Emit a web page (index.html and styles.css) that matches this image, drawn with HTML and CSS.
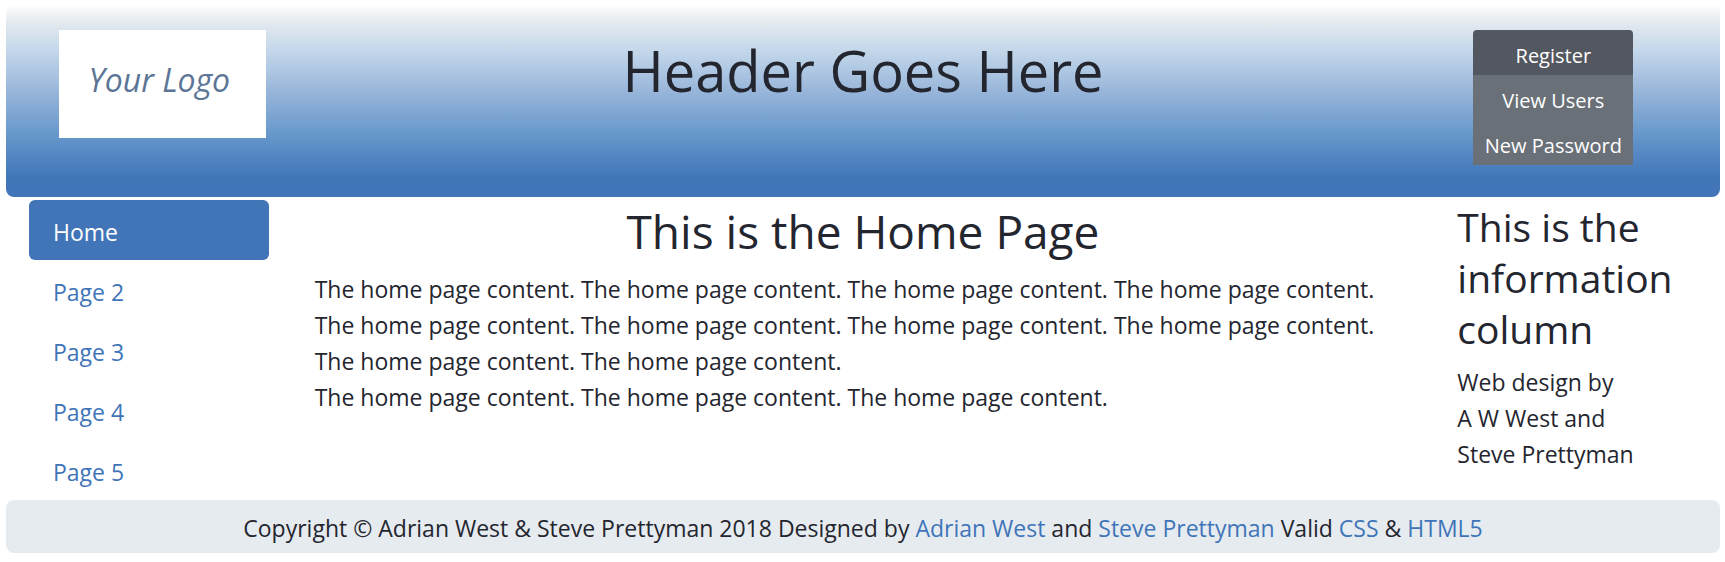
FILE: index.html
```html
<!DOCTYPE html>
<html lang="en">
<head>
<meta charset="utf-8">
<title>Home Page</title>
<meta name="viewport" content="width=device-width, initial-scale=1">
<link rel="stylesheet" href="styles.css">
</head>
<body class="page">
<header class="header">
  <div class="logo-cell"><div class="logo">Your Logo</div></div>
  <h1 class="header-title">Header Goes Here</h1>
  <nav class="header-nav" aria-label="Account">
    <button class="header-button header-button-active" type="button">Register</button>
    <button class="header-button" type="button">View Users</button>
    <button class="header-button" type="button">New Password</button>
  </nav>
</header>
<div class="body-row">
  <nav class="side-nav" aria-label="Pages">
    <a class="side-link side-link-active" href="#home">Home</a>
    <a class="side-link" href="#page2">Page 2</a>
    <a class="side-link" href="#page3">Page 3</a>
    <a class="side-link" href="#page4">Page 4</a>
    <a class="side-link" href="#page5">Page 5</a>
  </nav>
  <main class="content">
    <h2 class="content-title">This is the Home Page</h2>
    <p class="text">The home page content. The home page content. The home page content. The home page content.<br>
    The home page content. The home page content. The home page content. The home page content.<br>
    The home page content. The home page content.<br>
    The home page content. The home page content. The home page content.</p>
  </main>
  <aside class="info">
    <h3 class="info-title">This is the information column</h3>
    <p class="text">Web design by<br>A W West and<br>Steve Prettyman</p>
  </aside>
</div>
<footer class="footer">
  <p class="text">Copyright © Adrian West &amp; Steve Prettyman 2018 Designed by <a class="link" href="#west">Adrian West</a> and <a class="link" href="#prettyman">Steve Prettyman</a> Valid <a class="link" href="#css">CSS</a> &amp; <a class="link" href="#html5">HTML5</a></p>
</footer>
</body>
</html>
```
FILE: styles.css
```css
* {
  box-sizing: border-box;
}

.page {
  margin: 0;
  padding: 5px 5px 8px 6px;
  background: #fff;
  color: #24262f;
  font-family: "Open Sans", "Noto Sans", sans-serif;
  font-size: 23px;
  line-height: 36px;
}

.header,
.body-row {
  display: grid;
  grid-template-columns: 1fr 4fr 1fr;
}

.header {
  align-items: start;
  padding: 25px 0 32px;
  border-radius: 0 0 8px 8px;
  background: linear-gradient(#fff, #e6ebf0 8%, #bfd4e9 26%, #96b4d9 46%, #6597cb 68%, #4175b7 90%);
}

.logo-cell {
  padding: 0 26px 0 53px;
}

.logo {
  padding: 32px 6px 40px 0;
  background: #fff;
  color: #5c7596;
  font-size: 32px;
  font-style: italic;
  text-align: center;
}

.header-title {
  margin: 0;
  padding-top: 4px;
  font-size: 56px;
  font-weight: 400;
  line-height: 72px;
  text-align: center;
}

.header-nav {
  display: flex;
  flex-direction: column;
  width: 160px;
  margin-left: 39px;
}

.header-button {
  height: 45px;
  padding: 6px 0 0;
  border: 0;
  background: #6a7078;
  color: #fff;
  font: inherit;
  font-size: 20px;
  white-space: nowrap;
}

.header-button:first-child {
  border-radius: 4px 4px 0 0;
}

.header-button-active {
  background: #53575f;
}

.body-row {
  padding-top: 3px;
}

.side-nav {
  display: flex;
  flex-direction: column;
  padding: 0 23px;
}

.side-link {
  padding: 14px 24px 10px;
  border-radius: 6px;
  color: #3f75b8;
  text-decoration: none;
}

.side-link-active {
  background: #4175b7;
  color: #fff;
}

.content {
  padding: 1px 23px 0;
}

.content-title {
  margin: 0 0 10px;
  font-size: 46px;
  font-weight: 400;
  line-height: 60px;
  text-align: center;
}

.text {
  margin: 0;
}

.info {
  padding: 1px 23px 0;
}

.info-title {
  margin: 0 0 10px;
  font-size: 39px;
  font-weight: 400;
  line-height: 51px;
}

.footer {
  padding: 10px 16px 7px;
  border-radius: 8px;
  background: #e6ebf0;
  text-align: center;
}

.link {
  color: #3f75b8;
  text-decoration: none;
}
```
